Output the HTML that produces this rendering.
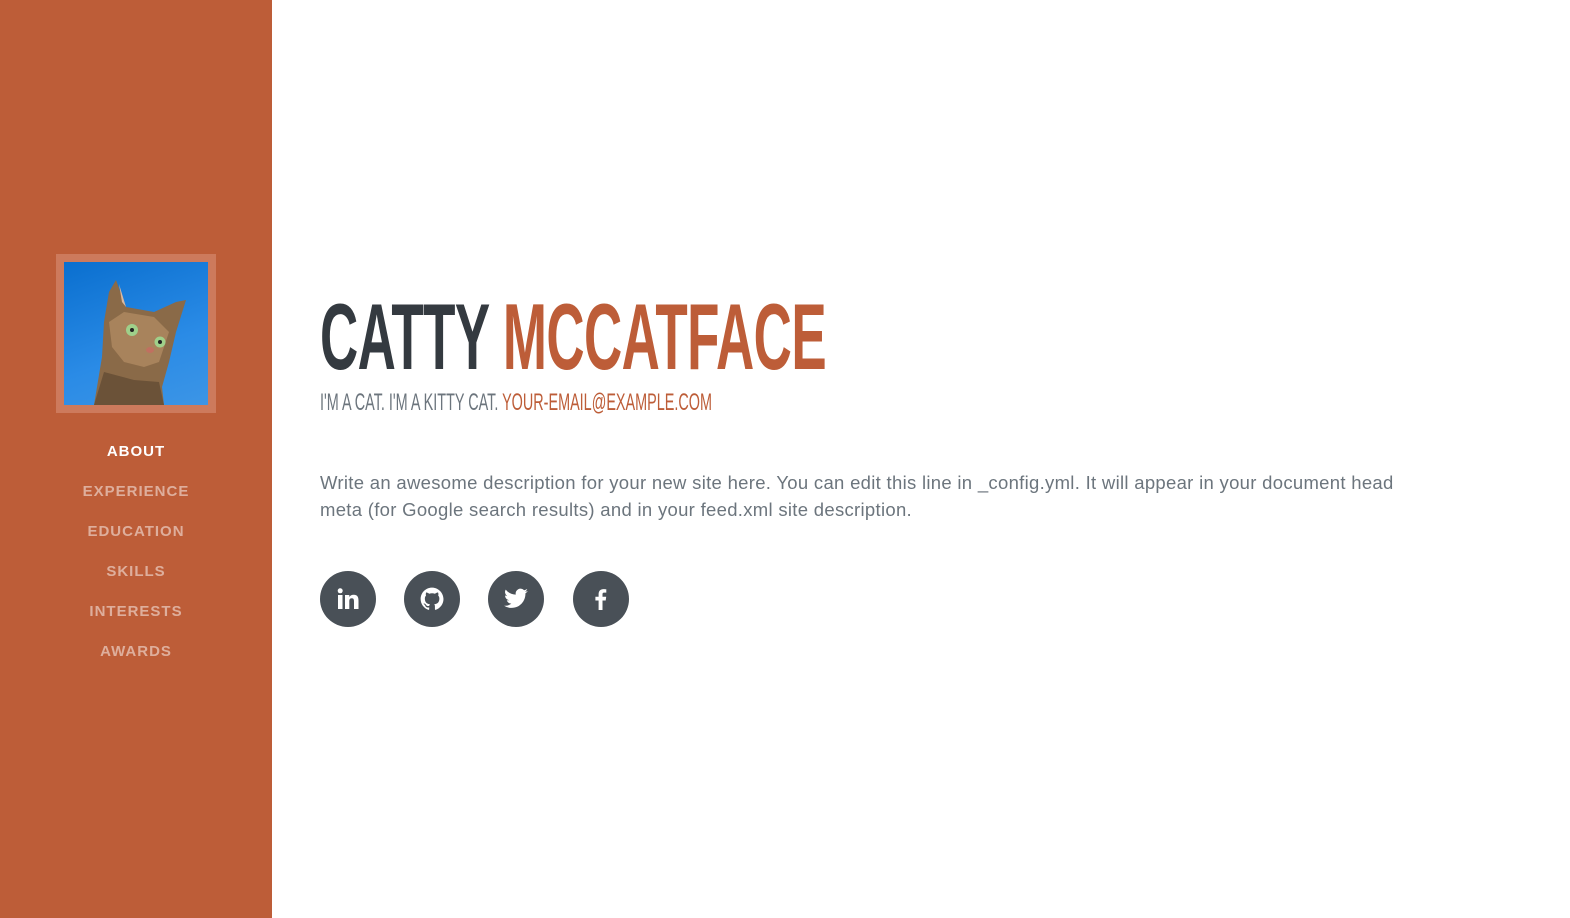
<!DOCTYPE html>
<html><head><meta charset="utf-8"><style>
*{margin:0;padding:0;box-sizing:border-box}
body{width:1570px;height:918px;overflow:hidden;background:#fff;font-family:"Liberation Sans",sans-serif;position:relative}
#side{position:absolute;left:0;top:0;width:272px;height:918px;background:#bd5d38}
#av{position:absolute;left:56px;top:254px;width:160px;height:159px;background:#cd7a5c;padding:8px}
#av .img{width:144px;height:143px;background:linear-gradient(160deg,#0a6fcf,#2a8be6 60%,#3c95e6);overflow:hidden;position:relative}
nav a{position:absolute;left:0;width:272px;text-align:center;color:rgba(255,255,255,.5);font-weight:bold;font-size:15px;letter-spacing:1px;text-decoration:none}
nav a.on{color:#fff}
h1{position:absolute;left:320px;top:290px;font-family:"Liberation Sans Narrow","Liberation Sans",sans-serif;font-weight:bold;font-size:94px;line-height:94px;color:#343a40;white-space:nowrap;transform:scaleX(.563);transform-origin:0 0;letter-spacing:-1px}
h1 span,.sub span{color:#bd5d38}
.sub{position:absolute;left:320px;top:390px;font-family:"Liberation Sans Narrow","Liberation Sans",sans-serif;font-size:24px;line-height:26px;color:#6c757d;white-space:nowrap;transform:scaleX(.6);transform-origin:0 0}
p{position:absolute;left:320px;top:469px;width:1100px;font-size:18.5px;line-height:27px;color:#6c757d;letter-spacing:.3px}
.ic{position:absolute;top:571px;width:56px;height:56px;border-radius:50%;background:#495057;display:flex;align-items:center;justify-content:center}
</style></head><body>
<div id="side">
<div id="av"><div class="img">
<svg width="144" height="143" viewBox="0 0 144 143">
<path d="M30 143 L38 95 L40 60 L45 30 L52 18 L62 45 L90 50 L112 40 L122 38 L112 70 L105 100 L98 125 L100 143 Z" fill="#8a6a48"/>
<path d="M45 60 L60 50 L90 55 L105 70 L95 100 L80 105 L60 100 L48 85Z" fill="#a8835c"/>
<path d="M58 40 L55 22 L62 45Z" fill="#d9b8a0"/>
<circle cx="68" cy="68" r="6" fill="#9fd08a"/><circle cx="96" cy="80" r="5.5" fill="#9fd08a"/>
<circle cx="68" cy="68" r="2" fill="#222"/><circle cx="96" cy="80" r="2" fill="#222"/>
<ellipse cx="86" cy="88" rx="4" ry="3" fill="#c07060"/>
<path d="M30 143 L40 110 L70 118 L95 120 L100 143Z" fill="#6b5238"/>
</svg></div></div>
<nav>
<a class="on" style="top:443px">ABOUT</a>
<a style="top:483px">EXPERIENCE</a>
<a style="top:523px">EDUCATION</a>
<a style="top:563px">SKILLS</a>
<a style="top:603px">INTERESTS</a>
<a style="top:643px">AWARDS</a>
</nav>
</div>
<h1>CATTY <span>MCCATFACE</span></h1>
<div class="sub">I'M A CAT. I'M A KITTY CAT. <span>YOUR-EMAIL@EXAMPLE.COM</span></div>
<p>Write an awesome description for your new site here. You can edit this line in _config.yml. It will appear in your document head<br>meta (for Google search results) and in your feed.xml site description.</p>
<div class="ic" style="left:320px"><svg width="24" height="24" viewBox="0 0 24 24" fill="#fff"><rect x="2" y="8" width="4.5" height="14"/><circle cx="4.2" cy="3.8" r="2.5"/><path d="M9 8h4.3v2c.7-1.3 2.3-2.3 4.4-2.3 4 0 4.8 2.6 4.8 6V22h-4.5v-7.2c0-1.8-.1-3.5-2.2-3.5-2.2 0-2.5 1.6-2.5 3.4V22H9z"/></svg></div>
<div class="ic" style="left:404px"><svg width="26" height="26" viewBox="0 0 24 24" fill="#fff"><path d="M12 1.5C6.2 1.5 1.5 6.2 1.5 12c0 4.6 3 8.6 7.2 10 .5.1.7-.2.7-.5v-1.8c-2.9.6-3.5-1.4-3.5-1.4-.5-1.2-1.2-1.5-1.2-1.5-1-.7.1-.6.1-.6 1 .1 1.6 1.1 1.6 1.1.9 1.6 2.5 1.2 3.1.9.1-.7.4-1.2.7-1.4-2.3-.3-4.8-1.2-4.8-5.2 0-1.1.4-2.1 1.1-2.8-.1-.3-.5-1.3.1-2.8 0 0 .9-.3 2.9 1.1a10 10 0 0 1 5.2 0c2-1.4 2.9-1.1 2.9-1.1.6 1.5.2 2.5.1 2.8.7.7 1.1 1.7 1.1 2.8 0 4-2.5 4.9-4.8 5.2.4.3.7 1 .7 1.9v2.8c0 .3.2.6.7.5 4.2-1.4 7.2-5.4 7.2-10C22.5 6.2 17.8 1.5 12 1.5z"/></svg></div>
<div class="ic" style="left:488px"><svg width="26" height="26" viewBox="0 0 24 24" fill="#fff"><path d="M23 4.6c-.8.4-1.7.6-2.6.7.9-.6 1.6-1.4 2-2.5-.9.5-1.9.9-2.9 1.1A4.5 4.5 0 0 0 11.8 8 12.8 12.8 0 0 1 2.5 3.3a4.5 4.5 0 0 0 1.4 6c-.7 0-1.4-.2-2-.6 0 2.2 1.6 4 3.6 4.4-.7.2-1.4.2-2 .1.6 1.8 2.2 3.1 4.2 3.1A9 9 0 0 1 1 18.2 12.8 12.8 0 0 0 7.9 20.2c8.3 0 12.8-6.9 12.8-12.8v-.6c.9-.6 1.6-1.4 2.3-2.2z"/></svg></div>
<div class="ic" style="left:573px"><svg width="24" height="24" viewBox="0 0 24 24" fill="#fff"><path d="M13.5 23v-9.5h3.2l.5-3.7h-3.7V7.4c0-1.1.3-1.8 1.8-1.8h2V2.3c-.3 0-1.5-.2-2.9-.2-2.9 0-4.8 1.7-4.8 5v2.7H6.4v3.7h3.2V23z"/></svg></div>
</body></html>
